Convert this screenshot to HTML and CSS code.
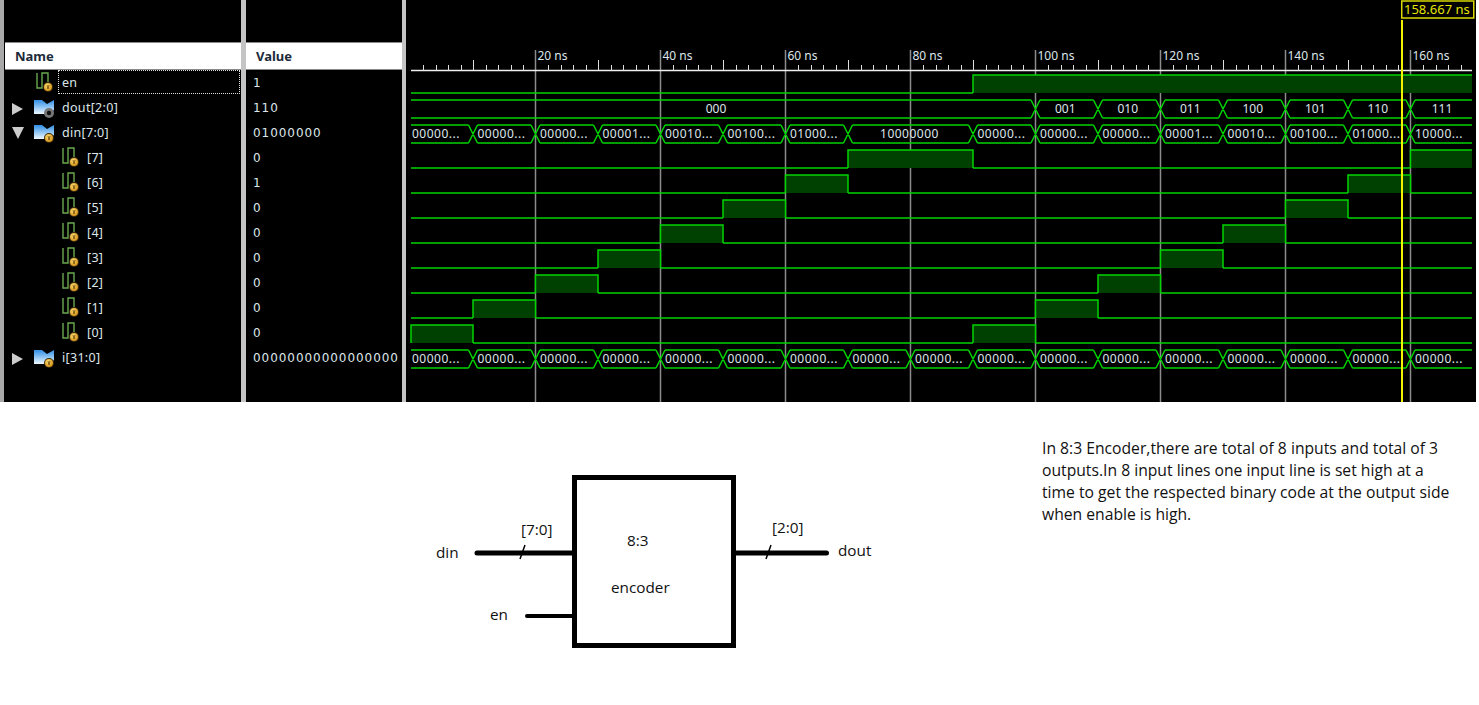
FILE: index.html
```html
<!DOCTYPE html>
<html lang="en">
<head>
    <meta charset="UTF-8">
    <title>8:3 Encoder</title>
    <link rel="stylesheet" href="styles.css">
</head>
<body>
    <svg class="defs" width="0" height="0">
        <defs>
            <radialGradient id="coin" cx="40%" cy="35%" r="70%">
                <stop offset="0" stop-color="#ffe27a"/>
                <stop offset="1" stop-color="#d08a10"/>
            </radialGradient>
            <linearGradient id="folder" x1="0" y1="0" x2="0" y2="1">
                <stop offset="0" stop-color="#2f8fe6"/>
                <stop offset="1" stop-color="#eef8ff"/>
            </linearGradient>
            <symbol id="sig" viewBox="0 0 20 22">
                <path d="M3 1V16H8V1H14V11" fill="none" stroke="#6aa84f" stroke-width="1.4"/>
                <circle cx="14" cy="15" r="5" fill="#3a2d10"/>
                <circle cx="14" cy="15" r="4" fill="url(#coin)"/>
                <path d="M13 13L14 17L15 13" fill="none" stroke="#6a4500" stroke-width="0.8"/>
            </symbol>
            <symbol id="bus" viewBox="0 0 20 20">
                <path d="M0 1H8L13 5L20 1V11L15 15H0Z" fill="url(#folder)"/>
                <circle cx="15" cy="14" r="5" fill="#3a2d10"/>
                <circle cx="15" cy="14" r="4" fill="url(#coin)"/>
                <path d="M14 12L15 16L16 12" fill="none" stroke="#6a4500" stroke-width="0.8"/>
            </symbol>
            <symbol id="busout" viewBox="0 0 20 20">
                <path d="M0 1H8L13 5L20 1V11L15 15H0Z" fill="url(#folder)"/>
                <circle cx="15" cy="14" r="5" fill="#777"/>
                <circle cx="15" cy="14" r="2.2" fill="#111"/>
            </symbol>
        </defs>
    </svg>

    <div class="sim">
        <div class="col names">
            <div class="head">Name</div>
            <div class="row focus"><svg class="ico"><use href="#sig"/></svg><span>en</span></div>
            <div class="row"><i class="arrow right"></i><svg class="ico bus"><use href="#busout"/></svg><span>dout[2:0]</span></div>
            <div class="row"><i class="arrow down"></i><svg class="ico bus"><use href="#bus"/></svg><span>din[7:0]</span></div>
            <div class="row sub"><svg class="ico"><use href="#sig"/></svg><span>[7]</span></div>
            <div class="row sub"><svg class="ico"><use href="#sig"/></svg><span>[6]</span></div>
            <div class="row sub"><svg class="ico"><use href="#sig"/></svg><span>[5]</span></div>
            <div class="row sub"><svg class="ico"><use href="#sig"/></svg><span>[4]</span></div>
            <div class="row sub"><svg class="ico"><use href="#sig"/></svg><span>[3]</span></div>
            <div class="row sub"><svg class="ico"><use href="#sig"/></svg><span>[2]</span></div>
            <div class="row sub"><svg class="ico"><use href="#sig"/></svg><span>[1]</span></div>
            <div class="row sub"><svg class="ico"><use href="#sig"/></svg><span>[0]</span></div>
            <div class="row"><i class="arrow right"></i><svg class="ico bus"><use href="#bus"/></svg><span>i[31:0]</span></div>
        </div>
        <div class="col values">
            <div class="head">Value</div>
            <div class="row">1</div>
            <div class="row">110</div>
            <div class="row">01000000</div>
            <div class="row">0</div>
            <div class="row">1</div>
            <div class="row">0</div>
            <div class="row">0</div>
            <div class="row">0</div>
            <div class="row">0</div>
            <div class="row">0</div>
            <div class="row">0</div>
            <div class="row">00000000000000000</div>
        </div>
        <svg id="wave" class="wave" width="1066" height="402"></svg>
    </div>

    <div class="lower">
        <svg class="diagram" width="1042" height="303" viewBox="0 402 1042 303">
            <rect class="box" x="574.5" y="477.5" width="159" height="168"/>
            <path class="wire" d="M477 553H572M736 553H826.5"/>
            <path class="wire thin" d="M527 616H572"/>
            <path class="slash" d="M525 545L520 559M771 545L766 559"/>
            <text x="436" y="558">din</text>
            <text x="521" y="535">[7:0]</text>
            <text x="627" y="546">8:3</text>
            <text x="611" y="593">encoder</text>
            <text x="490" y="620">en</text>
            <text x="772" y="533">[2:0]</text>
            <text x="838" y="556">dout</text>
        </svg>
        <p class="note">In 8:3 Encoder,there are total of 8 inputs and total of 3 outputs.In 8 input lines one input line is set high at a time to get the respected binary code at the output side when enable is high.</p>
    </div>

    <script src="script.js"></script>
</body>
</html>
```

FILE: styles.css
```css
html, body {
    margin: 0;
    background-color: #fff;
    overflow: hidden;
}

.defs {
    display: block;
    height: 0;
}

.sim {
    display: flex;
    height: 402px;
    width: 1476px;
    box-sizing: border-box;
    background-color: #000;
    border-left: 4px solid #a8a8a8;
    font-family: "Noto Sans", sans-serif;
    font-size: 12.5px;
    color: #dde6ea;
}

.col {
    flex: none;
    box-sizing: border-box;
    padding-top: 42px;
    overflow: hidden;
}

.names {
    width: 242px;
    border-right: 5px solid #c4c4c4;
}

.values {
    width: 160px;
    border-right: 4px solid #c4c4c4;
    margin-right: 4px;
}

.head {
    height: 26px;
    margin-left: 1px;
    padding-left: 10px;
    background-color: #fff;
    border: 1px solid #888;
    border-width: 1px 0;
    color: #1c2a3a;
    font-weight: 700;
    font-size: 13px;
    line-height: 27px;
}

.row {
    display: flex;
    align-items: center;
    height: 25px;
    position: relative;
    padding-left: 30px;
    white-space: nowrap;
}

.names .row span {
    margin-left: 8px;
    letter-spacing: 0.3px;
}

.names .row.sub span {
    margin-left: 7px;
}

.row.sub {
    padding-left: 56px;
}

.row.focus::after {
    content: "";
    position: absolute;
    left: 54px;
    right: 1px;
    top: 0;
    bottom: 1px;
    border: 1px dotted #ddd;
}

.ico {
    width: 20px;
    height: 22px;
    flex: none;
}

.ico.bus {
    height: 20px;
    margin-top: 3px;
}

.arrow {
    position: absolute;
    left: 8px;
    top: 8px;
    width: 0;
    height: 0;
    border-style: solid;
    border-color: transparent;
}

.arrow.right {
    border-width: 6.5px 0 6.5px 11px;
    border-left-color: #ccc;
}

.arrow.down {
    top: 7px;
    border-width: 12px 6.5px 0 6.5px;
    border-top-color: #ccc;
}

.values .row {
    padding-left: 7px;
    font-family: "DejaVu Sans", sans-serif;
    font-size: 12px;
    letter-spacing: 0.95px;
}

.values .head {
    margin-left: 0;
}

.wave {
    flex: none;
    display: block;
}

.wave text {
    font-family: "Noto Sans", sans-serif;
    font-size: 12px;
    fill: #dde6ea;
}

.wave .bus-text {
    letter-spacing: 0.5px;
}

.wave .tick {
    stroke: #ddd;
    fill: none;
}

.wave .ruler {
    stroke: #eee;
    stroke-width: 1.5;
    fill: none;
}

.wave .grid {
    stroke: #8c8c8c;
    stroke-width: 1.5;
    fill: none;
}

.wave .trace {
    stroke: #00d400;
    stroke-width: 1.5;
    fill: none;
}

.wave .fill {
    fill: #004000;
}

.wave .cursor {
    stroke: #f2f200;
    stroke-width: 2;
}

.wave .cursor-box {
    stroke: #d8d800;
    stroke-width: 1.5;
    fill: #000;
}

.wave .cursor-text {
    fill: #e6e600;
    font-size: 13px;
}

.lower {
    display: flex;
    height: 303px;
    font-family: "Open Sans", sans-serif;
    color: #111;
}

.diagram {
    flex: none;
    display: block;
}

.diagram text {
    font-family: "Open Sans", sans-serif;
    font-size: 15.3px;
    fill: #111;
}

.box {
    fill: #fff;
    stroke: #000;
    stroke-width: 5;
}

.wire {
    stroke: #000;
    stroke-width: 5;
    stroke-linecap: round;
    fill: none;
}

.wire.thin {
    stroke-width: 4;
}

.slash {
    stroke: #000;
    stroke-width: 1.5;
    fill: none;
}

.note {
    width: 408px;
    margin: 35px 0 0 0;
    font-size: 15.7px;
    line-height: 22px;
}
```

FILE: script.js
```js
const svg = document.getElementById("wave");
const NS = "http://www.w3.org/2000/svg";
const X0 = 0.5;            // 0 ns inside the svg
const NS_PX = 6.25;
const END = 1062;

function tx(t) {
    return X0 + t * NS_PX;
}

function add(name, attrs, text) {
    const el = document.createElementNS(NS, name);
    for (const key in attrs) {
        el.setAttribute(key, attrs[key]);
    }
    if (text) el.textContent = text;
    svg.appendChild(el);
    return el;
}

// ruler
let ticks = "";
for (let t = 2; tx(t) < END; t += 2) {
    if (t % 20 === 0) continue;
    const x = Math.round(tx(t)) + 0.5;
    ticks += "M" + x + (t % 10 === 0 ? " 60V70" : " 65V70");
}
let grid = "";
for (let t = 20; t <= 160; t += 20) {
    const x = Math.round(tx(t)) - 0.5;
    grid += "M" + x + " 50V402";
    add("text", { x: x + 2, y: 60 }, t + " ns");
}
add("path", { class: "grid", d: grid });
add("path", { class: "tick", d: ticks });
add("path", { class: "ruler", d: "M1 70.5H" + END });

// single bit rows: list of [from, to] high times
function bitRow(c, highs) {
    const hi = c - 8;
    const lo = c + 10;
    let d = "";
    let x = 1;
    highs.forEach(function (h) {
        const a = Math.max(tx(h[0]), 1);
        const b = h[1] === null ? END : tx(h[1]);
        add("rect", { class: "fill", x: a, y: hi, width: b - a, height: lo - hi });
        if (a > x) d += "M" + x + " " + lo + "H" + a;
        d += "M" + a + " " + lo + "V" + hi + "H" + b;
        if (h[1] !== null) d += "V" + lo;
        x = b;
    });
    if (x < END) d += "M" + x + " " + lo + "H" + END;
    add("path", { class: "trace", d: d });
}

// bus rows: list of [from, label]
function busRow(c, segs, center) {
    const hi = c - 8;
    const lo = c + 10;
    let d = "";
    segs.forEach(function (s, i) {
        const a = i === 0 ? 1 : tx(s[0]) + 4.5;
        const next = segs[i + 1];
        const b = next ? tx(next[0]) - 4.5 : END;
        d += "M" + a + " " + hi + "H" + b + "M" + a + " " + lo + "H" + b;
        if (next) {
            const n = tx(next[0]) + 4.5;
            d += "M" + b + " " + hi + "L" + n + " " + lo + "M" + b + " " + lo + "L" + n + " " + hi;
        }
        if (center) {
            const shift = i === 0 ? 5 : 1.5;
            add("text", { x: (a + b) / 2 - shift, y: c + 5, "text-anchor": "middle" }, s[1]);
        } else {
            add("text", { class: "bus-text", x: a + (i === 0 ? 1 : 0), y: c + 5 }, s[1]);
        }
    });
    add("path", { class: "trace", d: d });
}

bitRow(83, [[90, null]]);
busRow(108, [[0, "000"], [100, "001"], [110, "010"], [120, "011"], [130, "100"], [140, "101"], [150, "110"], [160, "111"]], true);
busRow(133, [[0, "00000..."], [10, "00000..."], [20, "00000..."], [30, "00001..."], [40, "00010..."], [50, "00100..."], [60, "01000..."], [70, ""], [90, "00000..."], [100, "00000..."], [110, "00000..."], [120, "00001..."], [130, "00010..."], [140, "00100..."], [150, "01000..."], [160, "10000..."]]);
add("text", { class: "bus-text", x: tx(80) - 1, y: 138, "text-anchor": "middle" }, "10000000");
bitRow(158, [[70, 90], [160, null]]);
bitRow(183, [[60, 70], [150, 160]]);
bitRow(208, [[50, 60], [140, 150]]);
bitRow(233, [[40, 50], [130, 140]]);
bitRow(258, [[30, 40], [120, 130]]);
bitRow(283, [[20, 30], [110, 120]]);
bitRow(308, [[10, 20], [100, 110]]);
bitRow(333, [[0, 10], [90, 100]]);

const iSegs = [];
for (let t = 0; t <= 160; t += 10) {
    iSegs.push([t, "00000..."]);
}
busRow(358, iSegs);

// cursor
add("path", { class: "cursor", d: "M992 20V402" });
add("rect", { class: "cursor-box", x: 991.75, y: 1, width: 72, height: 17 });
add("text", { class: "cursor-text", x: 994, y: 14 }, "158.667 ns");
```
